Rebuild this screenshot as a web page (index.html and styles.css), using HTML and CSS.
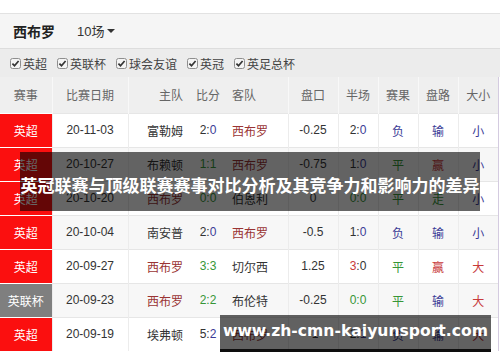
FILE: index.html
```html
<!DOCTYPE html>
<html lang="zh-CN">
<head>
<meta charset="utf-8">
<title>西布罗 近期赛事</title>
<link rel="stylesheet" href="styles.css">
</head>
<body>
<div class="page">
  <div class="team-bar">
    <span class="team-name">西布罗</span>
    <span class="count">10场<i class="caret"></i></span>
  </div>

  <div class="filters">
    <label class="filter"><svg class="cb" viewBox="0 0 11 11"><rect x="0.5" y="0.5" width="10" height="10" rx="2"/><path d="M2.4 5.6 L4.5 7.7 L8.6 3"/></svg>英超</label>
    <label class="filter"><svg class="cb" viewBox="0 0 11 11"><rect x="0.5" y="0.5" width="10" height="10" rx="2"/><path d="M2.4 5.6 L4.5 7.7 L8.6 3"/></svg>英联杯</label>
    <label class="filter"><svg class="cb" viewBox="0 0 11 11"><rect x="0.5" y="0.5" width="10" height="10" rx="2"/><path d="M2.4 5.6 L4.5 7.7 L8.6 3"/></svg>球会友谊</label>
    <label class="filter"><svg class="cb" viewBox="0 0 11 11"><rect x="0.5" y="0.5" width="10" height="10" rx="2"/><path d="M2.4 5.6 L4.5 7.7 L8.6 3"/></svg>英冠</label>
    <label class="filter"><svg class="cb" viewBox="0 0 11 11"><rect x="0.5" y="0.5" width="10" height="10" rx="2"/><path d="M2.4 5.6 L4.5 7.7 L8.6 3"/></svg>英足总杯</label>
  </div>

  <div class="board">
    <table class="matches">
      <colgroup>
        <col class="c-league"><col class="c-date"><col class="c-home"><col class="c-score"><col class="c-away">
        <col class="c-line"><col class="c-half"><col class="c-small"><col class="c-small"><col class="c-small">
      </colgroup>
      <thead>
        <tr>
          <th>赛事</th><th class="sep">比赛日期</th><th class="sep home">主队</th><th>比分</th><th class="away">客队</th>
          <th class="sep">盘口</th><th class="sep">半场</th><th class="sep">赛果</th><th class="sep">盘路</th><th class="sep">大小</th>
        </tr>
      </thead>
      <tbody>
        <tr>
          <td class="lg epl">英超</td><td class="sep">20-11-03</td><td class="sep home">富勒姆</td>
          <td>2:<span class="lose">0</span></td><td class="away me">西布罗</td>
          <td class="sep">-0.25</td><td class="sep">2:<span class="lose">0</span></td>
          <td class="sep lose">负</td><td class="sep lose">输</td><td class="sep lose">小</td>
        </tr>
        <tr>
          <td class="lg epl">英超</td><td class="sep">20-10-27</td><td class="sep home">布赖顿</td>
          <td class="draw">1:1</td><td class="away me">西布罗</td>
          <td class="sep">-0.75</td><td class="sep">1:<span class="lose">0</span></td>
          <td class="sep draw">平</td><td class="sep win">赢</td><td class="sep lose">小</td>
        </tr>
        <tr>
          <td class="lg epl">英超</td><td class="sep">20-10-20</td><td class="sep home me">西布罗</td>
          <td class="draw">0:0</td><td class="away">伯恩利</td>
          <td class="sep">0</td><td class="sep draw">0:0</td>
          <td class="sep draw">平</td><td class="sep draw">走</td><td class="sep lose">小</td>
        </tr>
        <tr>
          <td class="lg epl">英超</td><td class="sep">20-10-04</td><td class="sep home">南安普</td>
          <td>2:<span class="lose">0</span></td><td class="away me">西布罗</td>
          <td class="sep">-0.5</td><td class="sep">1:<span class="lose">0</span></td>
          <td class="sep lose">负</td><td class="sep lose">输</td><td class="sep lose">小</td>
        </tr>
        <tr>
          <td class="lg epl">英超</td><td class="sep">20-09-27</td><td class="sep home me">西布罗</td>
          <td class="draw">3:3</td><td class="away">切尔西</td>
          <td class="sep">1.25</td><td class="sep"><span class="win">3</span>:0</td>
          <td class="sep draw">平</td><td class="sep win">赢</td><td class="sep win">大</td>
        </tr>
        <tr>
          <td class="lg cup">英联杯</td><td class="sep">20-09-23</td><td class="sep home me">西布罗</td>
          <td class="draw">2:2</td><td class="away">布伦特</td>
          <td class="sep">-0.25</td><td class="sep draw">0:0</td>
          <td class="sep draw">平</td><td class="sep lose">输</td><td class="sep win">大</td>
        </tr>
        <tr>
          <td class="lg epl">英超</td><td class="sep">20-09-19</td><td class="sep home">埃弗顿</td>
          <td>5:<span class="lose">2</span></td><td class="away me">西布罗</td>
          <td class="sep">-1</td><td class="sep">2:<span class="lose">1</span></td>
          <td class="sep lose">负</td><td class="sep lose">输</td><td class="sep win">大</td>
        </tr>
      </tbody>
    </table>
  </div>

  <div class="banner">英冠联赛与顶级联赛赛事对比分析及其竞争力和影响力的差异</div>
  <div class="site-mark">www.zh-cmn-kaiyunsport.com</div>
</div>
</body>
</html>
```

FILE: styles.css
```css
* { box-sizing: border-box; }

html, body {
  margin: 0;
  background: #fff;
}

body {
  font-family: "Liberation Sans", "Noto Sans CJK SC", sans-serif;
  font-size: 12px;
  color: #333;
}

.page {
  position: relative;
  width: 500px;
  height: 362px;
  padding-top: 13px;
  overflow: hidden;
}

/* team selector bar */
.team-bar {
  height: 36px;
  display: flex;
  align-items: center;
  gap: 22px;
  padding: 0 0 1px 13px;
  background: #f5f5f5;
  border-top: 1px solid #e2e2e2;
  border-bottom: 1px solid #dddddd;
}

.team-name {
  font-size: 14px;
  font-weight: bold;
  color: #222;
}

.count {
  display: flex;
  align-items: center;
  gap: 3px;
  font-size: 13px;
  color: #333;
}

.caret {
  width: 0;
  height: 0;
  border-left: 4px solid transparent;
  border-right: 4px solid transparent;
  border-top: 4px solid #333;
}

/* competition filters */
.filters {
  height: 28px;
  display: flex;
  align-items: center;
  gap: 10px;
  padding-left: 10px;
  background: #ececec;
}

.filter {
  display: flex;
  align-items: center;
  gap: 2px;
  color: #444;
  font-size: 12px;
}

.cb {
  width: 11px;
  height: 11px;
}

.cb rect {
  fill: #f4f4f4;
  stroke: #8e8e8e;
  stroke-width: 1;
}

.cb path {
  fill: none;
  stroke: #333;
  stroke-width: 1.7;
}

/* result table */
.board {
  width: 499px;
  border-right: 1px solid #d4cbe0;
}

.matches {
  width: 498px;
  table-layout: fixed;
  border-collapse: collapse;
}

.c-league { width: 52px; }
.c-date { width: 76px; }
.c-home { width: 62px; }
.c-score { width: 36px; }
.c-away { width: 62px; }
.c-line { width: 50px; }
.c-half { width: 40px; }
.c-small { width: 40px; }

.matches th,
.matches td {
  padding: 0;
  text-align: center;
  white-space: nowrap;
  overflow: hidden;
  font-weight: normal;
}

.matches th {
  height: 36px;
  background: #efefef;
  color: #666;
}

.matches th.sep {
  border-left: 1px solid #f8f8f8;
}

.matches td {
  height: 34px;
  border-top: 1px solid #e6e6e6;
}

.matches td.sep {
  border-left: 1px solid #ececec;
}

.matches tbody tr:nth-child(even) td {
  background: #f7f7f7;
}

.matches .home {
  text-align: right;
  padding-right: 7px;
}

.matches .away {
  text-align: left;
  padding-left: 6px;
}

.matches td.lg {
  color: #fff;
  border-top-color: rgba(255, 255, 255, 0.25);
}

.matches tbody tr td.epl { background: #fb0f0f; }
.matches tbody tr td.cup { background: #7f7f7f; }

.me { color: #9a3434; }
.win { color: #c83a3a; }
.lose { color: #3b3b96; }
.draw { color: #379637; }

/* overlays */
.banner {
  position: absolute;
  left: 20px;
  top: 152px;
  width: 460px;
  height: 59px;
  padding-top: 6px;
  display: flex;
  align-items: center;
  justify-content: center;
  background: rgba(0, 0, 0, 0.6);
  color: #fff;
  font-family: "Noto Sans CJK SC", sans-serif;
  font-weight: bold;
  font-size: 17px;
  white-space: nowrap;
}

.site-mark {
  position: absolute;
  left: 220px;
  top: 315px;
  width: 271px;
  height: 37px;
  padding-bottom: 2px;
  display: flex;
  align-items: center;
  justify-content: center;
  background: rgba(0, 0, 0, 0.62);
  border-bottom: 3px solid rgba(0, 0, 0, 0.85);
  color: #fff;
  font-family: "DejaVu Sans", sans-serif;
  font-weight: bold;
  font-size: 15.6px;
  white-space: nowrap;
}
```
